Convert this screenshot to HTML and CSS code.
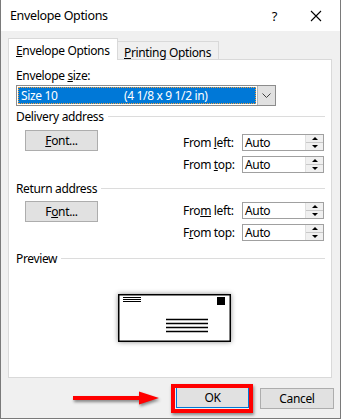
FILE: index.html
```html
<!DOCTYPE html>
<html>
<head>
<meta charset="utf-8">
<link rel="stylesheet" href="styles.css">
</head>
<body>
<div class="window">
  <div class="titlebar">
    <span class="title">Envelope Options</span>
    <span class="help">?</span>
    <svg class="close" width="12" height="12" viewBox="0 0 12 12"><path d="M1 1L11 11M11 1L1 11" stroke="#000" stroke-width="1.1" fill="none"/></svg>
  </div>
  <div class="body">
    <div class="tabs">
      <div class="tab active"><u>E</u>nvelope Options</div>
      <div class="tab"><u>P</u>rinting Options</div>
    </div>
    <div class="panel">
      <div class="label">Envelope <u>s</u>ize:</div>
      <div class="select">
        <div class="sel-value"><span class="sel-name">Size 10</span><span class="sel-dim">(4 1/8 x 9 1/2 in)</span></div>
        <div class="sel-btn"><svg width="9" height="5" viewBox="0 0 9 5"><path d="M0.5 0.5L4.5 4.5L8.5 0.5" stroke="#404040" fill="none"/></svg></div>
      </div>

      <div class="group-h first"><span>Delivery address</span><i></i></div>
      <div class="addr">
        <div class="btn font-btn"><u>F</u>ont...</div>
        <div class="spins">
          <div class="spin-row"><span class="spin-label">From <u>l</u>eft:</span><div class="spin"><span class="spin-val">Auto</span><div class="arrows"><div class="arr"><b class="up"></b></div><div class="arr"><b class="down"></b></div></div></div></div>
          <div class="spin-row"><span class="spin-label">From <u>t</u>op:</span><div class="spin"><span class="spin-val">Auto</span><div class="arrows"><div class="arr"><b class="up"></b></div><div class="arr"><b class="down"></b></div></div></div></div>
        </div>
      </div>

      <div class="group-h second"><span>Return address</span><i></i></div>
      <div class="addr ret">
        <div class="btn font-btn">F<u>o</u>nt...</div>
        <div class="spins">
          <div class="spin-row"><span class="spin-label">Fro<u>m</u> left:</span><div class="spin"><span class="spin-val">Auto</span><div class="arrows"><div class="arr"><b class="up"></b></div><div class="arr"><b class="down"></b></div></div></div></div>
          <div class="spin-row"><span class="spin-label">F<u>r</u>om top:</span><div class="spin"><span class="spin-val">Auto</span><div class="arrows"><div class="arr"><b class="up"></b></div><div class="arr"><b class="down"></b></div></div></div></div>
        </div>
      </div>

      <div class="group-h third"><span>Preview</span><i></i></div>
      <div class="envelope">
        <svg width="113" height="48" viewBox="0 0 113 48">
          <rect x="0.75" y="0.75" width="111.5" height="46.5" fill="#fff" stroke="#000" stroke-width="1.5"/>
          <path d="M5 3.5H23M5 5.5H23M5 7.5H23" stroke="#000" stroke-width="1"/>
          <rect x="99" y="3" width="8" height="8" fill="#000"/>
          <path d="M48 25.5H90M48 29.5H90M48 33.5H90M48 37.5H90" stroke="#000" stroke-width="1.3"/>
        </svg>
      </div>
    </div>
    <div class="buttons">
      <div class="btn ok">OK</div>
      <div class="btn cancel">Cancel</div>
    </div>
  </div>
  <div class="redbox"></div>
  <svg class="arrow" width="94" height="20" viewBox="0 0 94 20">
    <path d="M3 7H69V2.5L89 9L69 15.5V11H3Z" fill="#f00"/>
  </svg>
</div>
</body>
</html>
```
FILE: styles.css
```css
* { box-sizing: border-box; }
html, body { margin: 0; padding: 0; }
body {
  width: 341px;
  height: 419px;
  background: #fff;
  font-family: "Noto Sans", "Open Sans", sans-serif;
  font-size: 12px;
  letter-spacing: -0.35px;
  color: #000;
  overflow: hidden;
}
u { text-decoration: underline; text-underline-offset: 1px; text-decoration-thickness: 1px; }
.window {
  position: relative;
  width: 341px;
  height: 419px;
  border: 1px solid #7a7a7a;
  border-top: none;
  display: flex;
  flex-direction: column;
}
.titlebar {
  height: 31px;
  background: #fff;
  display: flex;
  align-items: center;
  padding-left: 9px;
  flex: none;
}
.title { font-size: 12.5px; flex: 1; line-height: 15px; }
.help { font-size: 13px; margin-right: 33px; }
.close { margin-right: 18px; }
.body {
  flex: 1;
  background: #f0f0f0;
  padding: 7px 8px 0 7px;
  display: flex;
  flex-direction: column;
}
.tabs {
  display: flex;
  align-items: flex-end;
  height: 21px;
  position: relative;
  z-index: 2;
}
.tab {
  border: 1px solid #d9d9d9;
  border-bottom: none;
  line-height: 15px;
  white-space: nowrap;
}
.tab.active {
  width: 110px;
  height: 22px;
  margin-bottom: -1px;
  background: #fff;
  padding: 4px 0 0 7px;
}
.tab:not(.active) {
  width: 101px;
  height: 18px;
  border-left: none;
  padding: 3px 0 0 6px;
  background: #f0f0f0;
}
.panel {
  height: 319px;
  border: 1px solid #d9d9d9;
  background: #fff;
  padding: 8px 7px 0 7px;
  display: flex;
  flex-direction: column;
}
.label { line-height: 15px; }
.select {
  margin-top: 2px;
  width: 260px;
  height: 21px;
  border: 1px solid #8c8c8c;
  display: flex;
  background: #fff;
}
.sel-value {
  flex: 1;
  margin: 1px;
  background: #0078d7;
  color: #fff;
  border: 1px dotted #f0a040;
  display: flex;
  align-items: center;
  padding-left: 2px;
  line-height: 15px;
  white-space: nowrap;
}
.sel-name { width: 103px; }
.sel-btn {
  width: 18px;
  background: #e1e1e1;
  border-left: 1px solid #b5b5b5;
  display: flex;
  align-items: center;
  justify-content: center;
}
.group-h {
  display: flex;
  align-items: center;
  line-height: 15px;
  margin-right: -1px;
}
.group-h i {
  flex: 1;
  height: 1px;
  background: #dcdcdc;
  margin-left: 4px;
}
.group-h.first { margin-top: 3px; }
.group-h.second { margin-top: 8px; }
.group-h.third { margin-top: 10px; }
.addr { display: flex; align-items: flex-start; }
.btn {
  background: #e1e1e1;
  border: 1px solid #adadad;
  display: flex;
  align-items: center;
  justify-content: center;
  line-height: 15px;
}
.font-btn {
  width: 73px;
  height: 21px;
  margin: 6px 0 0 9px;
}
.ret .font-btn { margin-top: 5px; }
.spins {
  margin-left: auto;
  margin-top: 10px;
  display: flex;
  flex-direction: column;
  gap: 5px;
}
.ret .spins { margin-top: 6px; }
.spin-row { display: flex; align-items: center; }
.spin-label { width: 59px; line-height: 15px; white-space: nowrap; }
.spin {
  width: 82px;
  height: 17px;
  border: 1px solid #a0a0a0;
  display: flex;
  background: #fff;
}
.spin-val { flex: 1; padding-left: 2px; line-height: 15px; }
.arrows {
  width: 18px;
  display: flex;
  flex-direction: column;
  border-left: 1px solid #e0e0e0;
}
.arr {
  flex: 1;
  background: #f0f0f0;
  display: flex;
  align-items: center;
  justify-content: center;
}
.arr + .arr { border-top: 1px solid #c8c8c8; }
.arr b { width: 0; height: 0; border-left: 3px solid transparent; border-right: 3px solid transparent; }
.arr b.up { border-bottom: 3px solid #000; }
.arr b.down { border-top: 3px solid #000; }
.envelope {
  margin: 28px 0 0 102px;
  width: 113px;
  height: 48px;
  box-shadow: 0 0 5px rgba(0,0,0,0.45);
}
.envelope svg { display: block; }
.buttons {
  display: flex;
  justify-content: flex-end;
  gap: 11px;
  margin-top: 9px;
  margin-right: -2px;
}
.buttons .btn { height: 21px; }
.ok { width: 73px; border-color: #0078d7; }
.cancel { width: 74px; margin-top: 1px; }
.redbox {
  position: absolute;
  left: 170px;
  top: 384px;
  width: 82px;
  height: 29px;
  border: 4px solid #f00;
  box-shadow: 1px 2px 3px rgba(0,0,0,0.45);
}
.arrow {
  position: absolute;
  left: 69px;
  top: 389px;
  filter: drop-shadow(1px 2px 1.5px rgba(0,0,0,0.45));
}
```
